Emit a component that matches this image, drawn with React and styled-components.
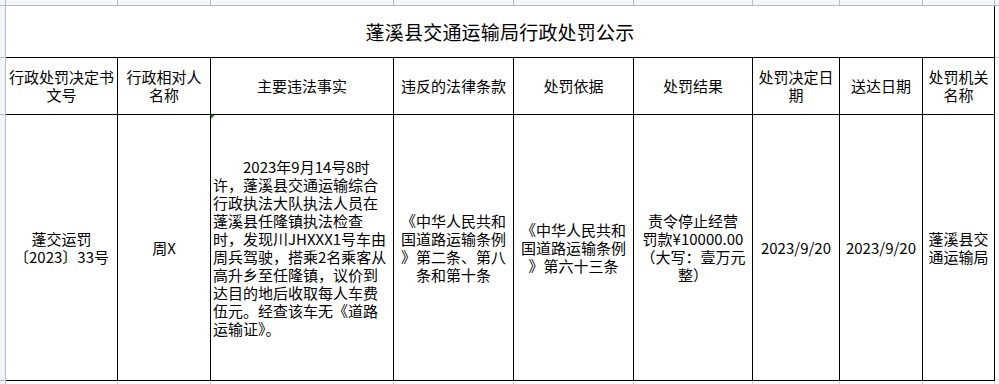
import React from 'react';
import styled, { createGlobalStyle } from 'styled-components';

const cols = [111, 92, 182, 119, 119, 118, 86, 82, 71];

const headers = [
    ['行政处罚决定书', '文号'],
    ['行政相对人', '名称'],
    ['主要违法事实'],
    ['违反的法律条款'],
    ['处罚依据'],
    ['处罚结果'],
    ['处罚决定日', '期'],
    ['送达日期'],
    ['处罚机关', '名称'],
];

const facts = [
    '2023年9月14号8时',
    '许，蓬溪县交通运输综合',
    '行政执法大队执法人员在',
    '蓬溪县任隆镇执法检查',
    '时，发现川JHXXX1号车由',
    '周兵驾驶，搭乘2名乘客从',
    '高升乡至任隆镇，议价到',
    '达目的地后收取每人车费',
    '伍元。经查该车无《道路',
    '运输证》。',
];

const row = [
    ['蓬交运罚', '〔2023〕33号'],
    ['周X'],
    null,
    ['《中华人民共和', '国道路运输条例', '》第二条、第八', '条和第十条'],
    ['《中华人民共和', '国道路运输条例', '》第六十三条'],
    ['责令停止经营', '罚款¥10000.00', '（大写：壹万元', '整）'],
    ['2023/9/20'],
    ['2023/9/20'],
    ['蓬溪县交', '通运输局'],
];

const GlobalStyle = createGlobalStyle`
    html, body {
        margin: 0;
        padding: 0;
        background: #fff;
        overflow: hidden;
    }
    body {
        font-family: "Noto Sans CJK SC", "Noto Sans", sans-serif;
        color: #000;
    }
`;

const App = () => (
    <>
        <GlobalStyle />
        <Sheet>
            <Strip>
                <Corner />
                {cols.map((w, i) => <ColHead key={i} w={w + 1} />)}
            </Strip>
            <Body>
                <Gutter>
                    <RowHead h={52} />
                    <RowHead h={57} />
                    <RowHead h={266} />
                </Gutter>
                <Table>
                    <Title>蓬溪县交通运输局行政处罚公示</Title>
                    {headers.map((lines, i) => (
                        <Cell key={i}>
                            {lines.map(l => <Line key={l}>{l}</Line>)}
                        </Cell>
                    ))}
                    {row.map((lines, i) => lines ? (
                        <Cell key={i}>
                            {lines.map(l => <Line key={l}>{l}</Line>)}
                        </Cell>
                    ) : (
                        <FactCell key={i}>
                            {facts.map((l, j) => <Line key={l} indent={j === 0}>{l}</Line>)}
                        </FactCell>
                    ))}
                </Table>
                <RightFill>
                    <FillRow h={52} />
                </RightFill>
            </Body>
            <Trail>
                <TrailGutter />
                {cols.map((w, i) => <TrailCell key={i} w={w + 1} />)}
            </Trail>
        </Sheet>
    </>
);

const Sheet = styled.div`
    display: flex;
    flex-direction: column;
    width: 999px;
    height: 384px;
    overflow: hidden;
`;

const Strip = styled.div`
    display: flex;
    height: 6px;
    flex: none;
    box-sizing: border-box;
    background: #f4f5f9;
    border-bottom: 1px solid #b5bcd1;
`;

const Corner = styled.div`
    width: 6px;
    box-sizing: border-box;
    border-right: 1px solid #b5bcd1;
`;

const ColHead = styled.div`
    width: ${p => p.w}px;
    box-sizing: border-box;
    border-right: 1px solid #b5bcd1;
`;

const Body = styled.div`
    display: flex;
    flex: none;
`;

const Gutter = styled.div`
    display: flex;
    flex-direction: column;
    width: 6px;
    background: #f4f5f9;
    box-sizing: border-box;
    border-right: 1px solid #b5bcd1;
`;

const RowHead = styled.div`
    height: ${p => p.h}px;
    box-sizing: border-box;
    border-bottom: 1px solid #b5bcd1;
`;

const Table = styled.div`
    display: grid;
    grid-template-columns: ${cols.map(c => c + 'px').join(' ')};
    grid-template-rows: 51px 56px 265px;
    gap: 1px;
    padding: 0 1px 1px 0;
    background: #000;
`;

const Title = styled.div`
    grid-column: 1 / -1;
    display: flex;
    align-items: center;
    justify-content: center;
    background: #fff;
    font-size: 19px;
    letter-spacing: 0.2px;
`;

const Cell = styled.div`
    display: flex;
    flex-direction: column;
    align-items: center;
    justify-content: center;
    background: #fff;
    font-size: 15px;
    line-height: 18px;
    text-align: center;
    white-space: nowrap;
`;

const FactCell = styled(Cell)`
    position: relative;
    align-items: flex-start;
    padding-left: 2px;

    &::before {
        content: '';
        position: absolute;
        top: 0;
        left: 0;
        border-top: 4px solid #1f8f1f;
        border-right: 4px solid transparent;
    }
`;

const Line = styled.div`
    padding-left: ${p => (p.indent ? '30px' : '0')};
`;

const RightFill = styled.div`
    flex: 1;
    display: flex;
    flex-direction: column;
`;

const FillRow = styled.div`
    height: ${p => p.h}px;
    box-sizing: border-box;
    border-bottom: 1px solid #c9cedd;
`;

const Trail = styled.div`
    display: flex;
    flex: 1;
`;

const TrailGutter = styled.div`
    width: 6px;
    box-sizing: border-box;
    background: #f4f5f9;
    border-right: 1px solid #b5bcd1;
`;

const TrailCell = styled.div`
    width: ${p => p.w}px;
    box-sizing: border-box;
    border-right: 1px solid #c9cedd;
`;

export default App;
